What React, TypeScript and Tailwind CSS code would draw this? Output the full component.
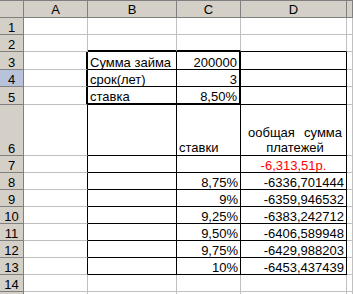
import type { ReactNode } from "react";

type Line = "g" | "k" | "K";
type CellSpec = { r?: Line; b?: Line; t?: ReactNode; a?: "l" | "r" | "c"; cls?: string };

const RIGHT: Record<Line, string> = {
  g: "border-r border-r-[#c0c0c0]",
  k: "border-r border-r-black",
  K: "border-r-2 border-r-black",
};

const BOTTOM: Record<Line, string> = {
  g: "border-b border-b-[#c0c0c0]",
  k: "border-b border-b-black",
  K: "border-b-2 border-b-black",
};

const ALIGN = {
  l: "justify-start pl-[2px]",
  r: "justify-end pr-[2px]",
  c: "justify-center",
};

const RATES = [
  ["8,75%", "-6336,701444"],
  ["9%", "-6359,946532"],
  ["9,25%", "-6383,242712"],
  ["9,50%", "-6406,589948"],
  ["9,75%", "-6429,988203"],
  ["10%", "-6453,437439"],
];

const empty: CellSpec[] = [{}, {}, {}, {}, {}];

const TOTAL_HEADER = (
  <div className="flex w-full flex-col items-center pl-[7px] pr-[4px] leading-[15px]">
    <div className="flex w-full justify-between">
      <span>ообщая</span>
      <span>сумма</span>
    </div>
    <span>платежей</span>
  </div>
);

const ROWS: { n: number; h: string; cells: CellSpec[] }[] = [
  { n: 1, h: "h-[17px]", cells: empty },
  { n: 2, h: "h-[17px]", cells: [{}, { b: "K" }, { b: "K" }, { b: "k" }, {}] },
  {
    n: 3,
    h: "h-[18px]",
    cells: [
      { r: "K" },
      { r: "k", b: "k", t: "Сумма займа" },
      { r: "K", b: "k", t: "200000", a: "r" },
      { r: "k", b: "k" },
      {},
    ],
  },
  {
    n: 4,
    h: "h-[17px]",
    cells: [
      { r: "K" },
      { r: "k", b: "k", t: "срок(лет)" },
      { r: "K", b: "k", t: "3", a: "r" },
      { r: "k", b: "k" },
      {},
    ],
  },
  {
    n: 5,
    h: "h-[18px]",
    cells: [
      { r: "K" },
      { r: "k", b: "K", t: "ставка" },
      { r: "K", b: "K", t: "8,50%", a: "r" },
      { r: "k", b: "k" },
      {},
    ],
  },
  {
    n: 6,
    h: "h-[51px]",
    cells: [
      { r: "k" },
      { r: "k", b: "k" },
      { r: "k", b: "k", t: "ставки", cls: "leading-[15px]" },
      { r: "k", b: "k", t: TOTAL_HEADER, a: "c" },
      {},
    ],
  },
  {
    n: 7,
    h: "h-[17px]",
    cells: [
      { r: "k" },
      { r: "k", b: "k" },
      { r: "k", b: "k" },
      { r: "k", b: "k", t: "-6,313,51р.", a: "c", cls: "text-[#ff0000]" },
      {},
    ],
  },
  ...RATES.map(([rate, sum], i) => ({
    n: 8 + i,
    h: "h-[17px]",
    cells: [
      { r: "k" as Line },
      { r: "k" as Line, b: "k" as Line },
      { r: "k" as Line, b: "k" as Line, t: rate, a: "r" as const },
      { r: "k" as Line, b: "k" as Line, t: sum, a: "r" as const },
      {},
    ],
  })),
  { n: 14, h: "h-[17px]", cells: empty },
  { n: 15, h: "h-[17px]", cells: empty },
];

function Cell({ spec }: { spec: CellSpec }) {
  return (
    <div
      className={`flex items-end overflow-hidden whitespace-nowrap bg-white leading-[13px] ${RIGHT[spec.r ?? "g"]} ${
        BOTTOM[spec.b ?? "g"]
      } ${ALIGN[spec.a ?? "l"]} ${spec.cls ?? ""}`}
    >
      {spec.t}
    </div>
  );
}

export default function App() {
  const grid = "grid grid-cols-[24px_64px_89px_64px_106px_1fr]";
  return (
    <div className="h-[294px] w-[353px] overflow-hidden bg-white font-['Liberation_Sans',Arial,sans-serif] text-[13px] text-black">
      <div className={`${grid} h-[18px]`}>
        {["", "A", "B", "C", "D", ""].map((label, i) => (
          <div
            key={i}
            className="flex items-center justify-center border-t border-r border-b border-[#808080] bg-[#d4d0c8] leading-[13px]"
          >
            {label}
          </div>
        ))}
      </div>
      {ROWS.map((row) => (
        <div key={row.n} className={`${grid} ${row.h}`}>
          {/* row 15 is only a sliver at the bottom edge, so its number is not shown */}
          <div
            className={`flex items-end justify-center border-r border-b border-[#808080] leading-[13px] ${
              row.n === 4 ? "bg-[#b8c2da]" : "bg-[#d4d0c8]"
            }`}
          >
            {row.n < 15 ? row.n : ""}
          </div>
          {row.cells.map((spec, i) => (
            <Cell key={i} spec={spec} />
          ))}
        </div>
      ))}
    </div>
  );
}
